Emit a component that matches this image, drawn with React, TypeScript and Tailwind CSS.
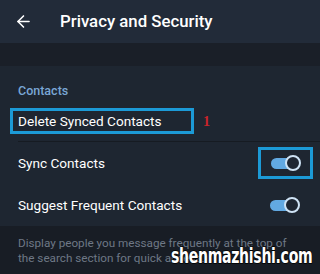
import { ArrowLeft } from 'lucide-react';

function Toggle() {
  return (
    <div className="relative w-[30px] h-[16px] flex items-center">
      <div className="w-[26px] h-[11px] rounded-full bg-[#62a9e2]" />
      <div className="absolute right-0 top-0 w-[16px] h-[16px] rounded-full bg-[#1e2632] border-2 border-[#cfe3f5]" />
    </div>
  );
}

export default function App() {
  return (
    <div className="relative w-[320px] h-[274px] overflow-hidden bg-[#181d25] font-['Roboto',sans-serif] text-white">
      <div className="h-[43px] bg-[#222b39] flex items-center">
        <ArrowLeft size={19} strokeWidth={2} className="ml-[14px] text-white" />
        <div className="ml-[27px] text-[16.8px] font-medium">Privacy and Security</div>
      </div>

      <div className="h-[23px] bg-[#1a1f28]" />

      <div className="bg-[#1e2631]">
        <div className="px-[18px] pt-[16px] h-[35px] text-[12.5px] text-[#7aa6d6] font-medium">Contacts</div>

        <div className="flex items-center h-[40px] pl-[10px]">
          <div className="w-[184px] h-[26px] border-[3px] border-[#1c9ad6] flex items-center pl-[5px] text-[13.6px]">
            Delete Synced Contacts
          </div>
          <span className="ml-[9px] font-['Liberation_Serif',serif] font-bold text-[#c8242b] text-[14px]">1</span>
        </div>

        <div className="ml-[18px] h-px bg-[#161b22]" />

        <div className="flex items-center justify-between h-[42px] pl-[18px] pr-[7px]">
          <span className="text-[13.6px]">Sync Contacts</span>
          <div className="w-[55px] h-[32px] border-[3px] border-[#1c9ad6] flex items-center justify-center">
            <Toggle />
          </div>
        </div>

        <div className="flex items-center justify-between h-[42px] pl-[18px] pr-[20px]">
          <span className="text-[13.6px]">Suggest Frequent Contacts</span>
          <Toggle />
        </div>
      </div>

      <div className="px-[18px] pt-[10px] text-[11.7px] leading-[14.5px] text-[#6e7886] whitespace-nowrap">
        <div>Display people you message frequently at the top of</div>
        <div>the search section for quick access.</div>
      </div>

      <div className="absolute left-[171px] top-[243px] font-['DejaVu_Sans',sans-serif] font-bold text-[22px] leading-[26px] text-white tracking-[-0.5px] origin-left scale-x-[0.64] whitespace-nowrap [-webkit-text-stroke:1.5px_black] [paint-order:stroke_fill]">
        shenmazhishi.com
      </div>
    </div>
  );
}
